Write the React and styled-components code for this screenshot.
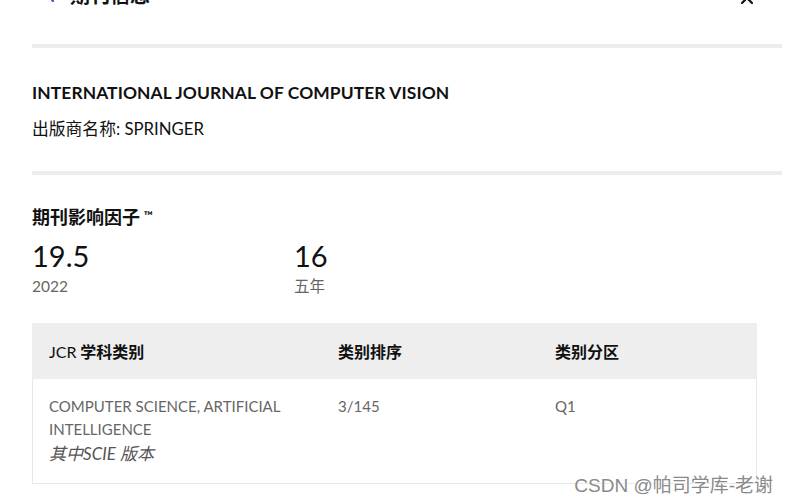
import React from "react";
import styled, { createGlobalStyle } from "styled-components";

const Global = createGlobalStyle`
  body {
    margin: 0;
    background: #fff;
    font-family: Lato, "Noto Sans CJK SC", sans-serif;
    color: #111;
  }
`;

const Page = styled.div`
  position: relative;
  width: 789px;
  height: 504px;
  overflow: hidden;
  padding: 0 7px 0 32px;
  box-sizing: border-box;
`;

const Header = styled.div`
  display: flex;
  align-items: center;
  height: 30px;
  margin-top: -21px;
  margin-bottom: 35px;
  padding: 0 29px 0 12px;
`;

const HeaderTitle = styled.h2`
  flex: 1;
  margin: 0 0 0 14px;
  font-size: 20px;
  font-weight: 700;
`;

const Divider = styled.hr`
  border: 0;
  height: 4px;
  background: #ededed;
  margin: 0;
`;

const Section = styled.section`
  padding: ${(p) => p.$pad || "32px 0 28px"};
`;

const JournalName = styled.h1`
  margin: 0;
  font-size: 17.4px;
  font-weight: 700;
  letter-spacing: 0.1px;
  line-height: 24px;
`;

const Publisher = styled.div`
  margin-top: 12px;
  font-size: 16.8px;
  line-height: 24px;
`;

const FactorTitle = styled.h3`
  margin: 0;
  font-size: 18px;
  font-weight: 700;
  line-height: 24px;

  sup {
    font-size: 12px;
    vertical-align: 4px;
    margin-left: 4px;
  }
`;

const Metrics = styled.div`
  display: grid;
  grid-template-columns: 262px 1fr;
  margin-top: 10px;
`;

const Metric = styled.div`
  display: flex;
  flex-direction: column;
`;

const Value = styled.span`
  font-size: 29px;
  line-height: 34px;
  color: #111;
`;

const Label = styled.span`
  font-size: 15.5px;
  line-height: 27px;
  color: #666;
`;

const Table = styled.div`
  width: 725px;
  margin-top: 23px;
`;

const Row = styled.div`
  display: grid;
  grid-template-columns: 289px 217px 1fr;
  background: ${(p) => (p.$head ? "#eeeeee" : "#fff")};
  min-height: ${(p) => (p.$head ? "56px" : "auto")};
  align-items: ${(p) => (p.$head ? "center" : "start")};
  border: ${(p) => (p.$head ? "0" : "1px solid #e8e8e8")};
  border-top: 0;
`;

const Cell = styled.div`
  padding: ${(p) => (p.$head ? "0 17px" : "16px 17px 16px 16px")};
  font-size: ${(p) => (p.$head ? "16px" : "15px")};
  font-weight: ${(p) => (p.$head ? 700 : 400)};
  color: ${(p) => (p.$head ? "#111" : "#666")};
  line-height: 23px;
`;

const Light = styled.span`
  font-weight: 400;
`;

const Edition = styled.em`
  display: block;
  font-size: 17px;
  line-height: 26px;
  color: #555;
`;

const Watermark = styled.div`
  position: absolute;
  right: 16px;
  bottom: 7px;
  font-family: "Liberation Sans", "Noto Sans CJK SC", sans-serif;
  font-size: 19px;
  color: #8a8a8a;
  text-shadow: 0 0 2px #fff, 0 0 2px #fff;
`;

const Icon = styled.svg`
  flex: none;
  stroke: ${(p) => p.$color || "#111"};
  fill: none;
  stroke-width: 2.2;
  stroke-linecap: round;
  margin-top: ${(p) => p.$drop || 0}px;
`;

export default function App() {
  return (
    <>
      <Global />
      <Page>
        <Header>
          <Icon width="12" height="20" viewBox="0 0 12 20" $color="#6b3fc7">
            <path d="M9 3 L3 10 L9 17" />
          </Icon>
          <HeaderTitle>期刊信息</HeaderTitle>
          <Icon width="12" height="12" viewBox="0 0 12 12" $drop={8}>
            <path d="M1 1 L11 11 M11 1 L1 11" />
          </Icon>
        </Header>
        <Divider />
        <Section $pad="33px 0 30px">
          <JournalName>INTERNATIONAL JOURNAL OF COMPUTER VISION</JournalName>
          <Publisher>出版商名称: SPRINGER</Publisher>
        </Section>
        <Divider />
        <Section $pad="29px 0 0">
          <FactorTitle>
            期刊影响因子<sup>™</sup>
          </FactorTitle>
          <Metrics>
            <Metric>
              <Value>19.5</Value>
              <Label>2022</Label>
            </Metric>
            <Metric>
              <Value>16</Value>
              <Label>五年</Label>
            </Metric>
          </Metrics>
          <Table>
            <Row $head>
              <Cell $head>
                <Light>JCR</Light> 学科类别
              </Cell>
              <Cell $head>类别排序</Cell>
              <Cell $head>类别分区</Cell>
            </Row>
            <Row>
              <Cell>
                COMPUTER SCIENCE, ARTIFICIAL INTELLIGENCE
                <Edition>其中SCIE 版本</Edition>
              </Cell>
              <Cell>3/145</Cell>
              <Cell>Q1</Cell>
            </Row>
          </Table>
        </Section>
        <Watermark>CSDN @帕司学库-老谢</Watermark>
      </Page>
    </>
  );
}
